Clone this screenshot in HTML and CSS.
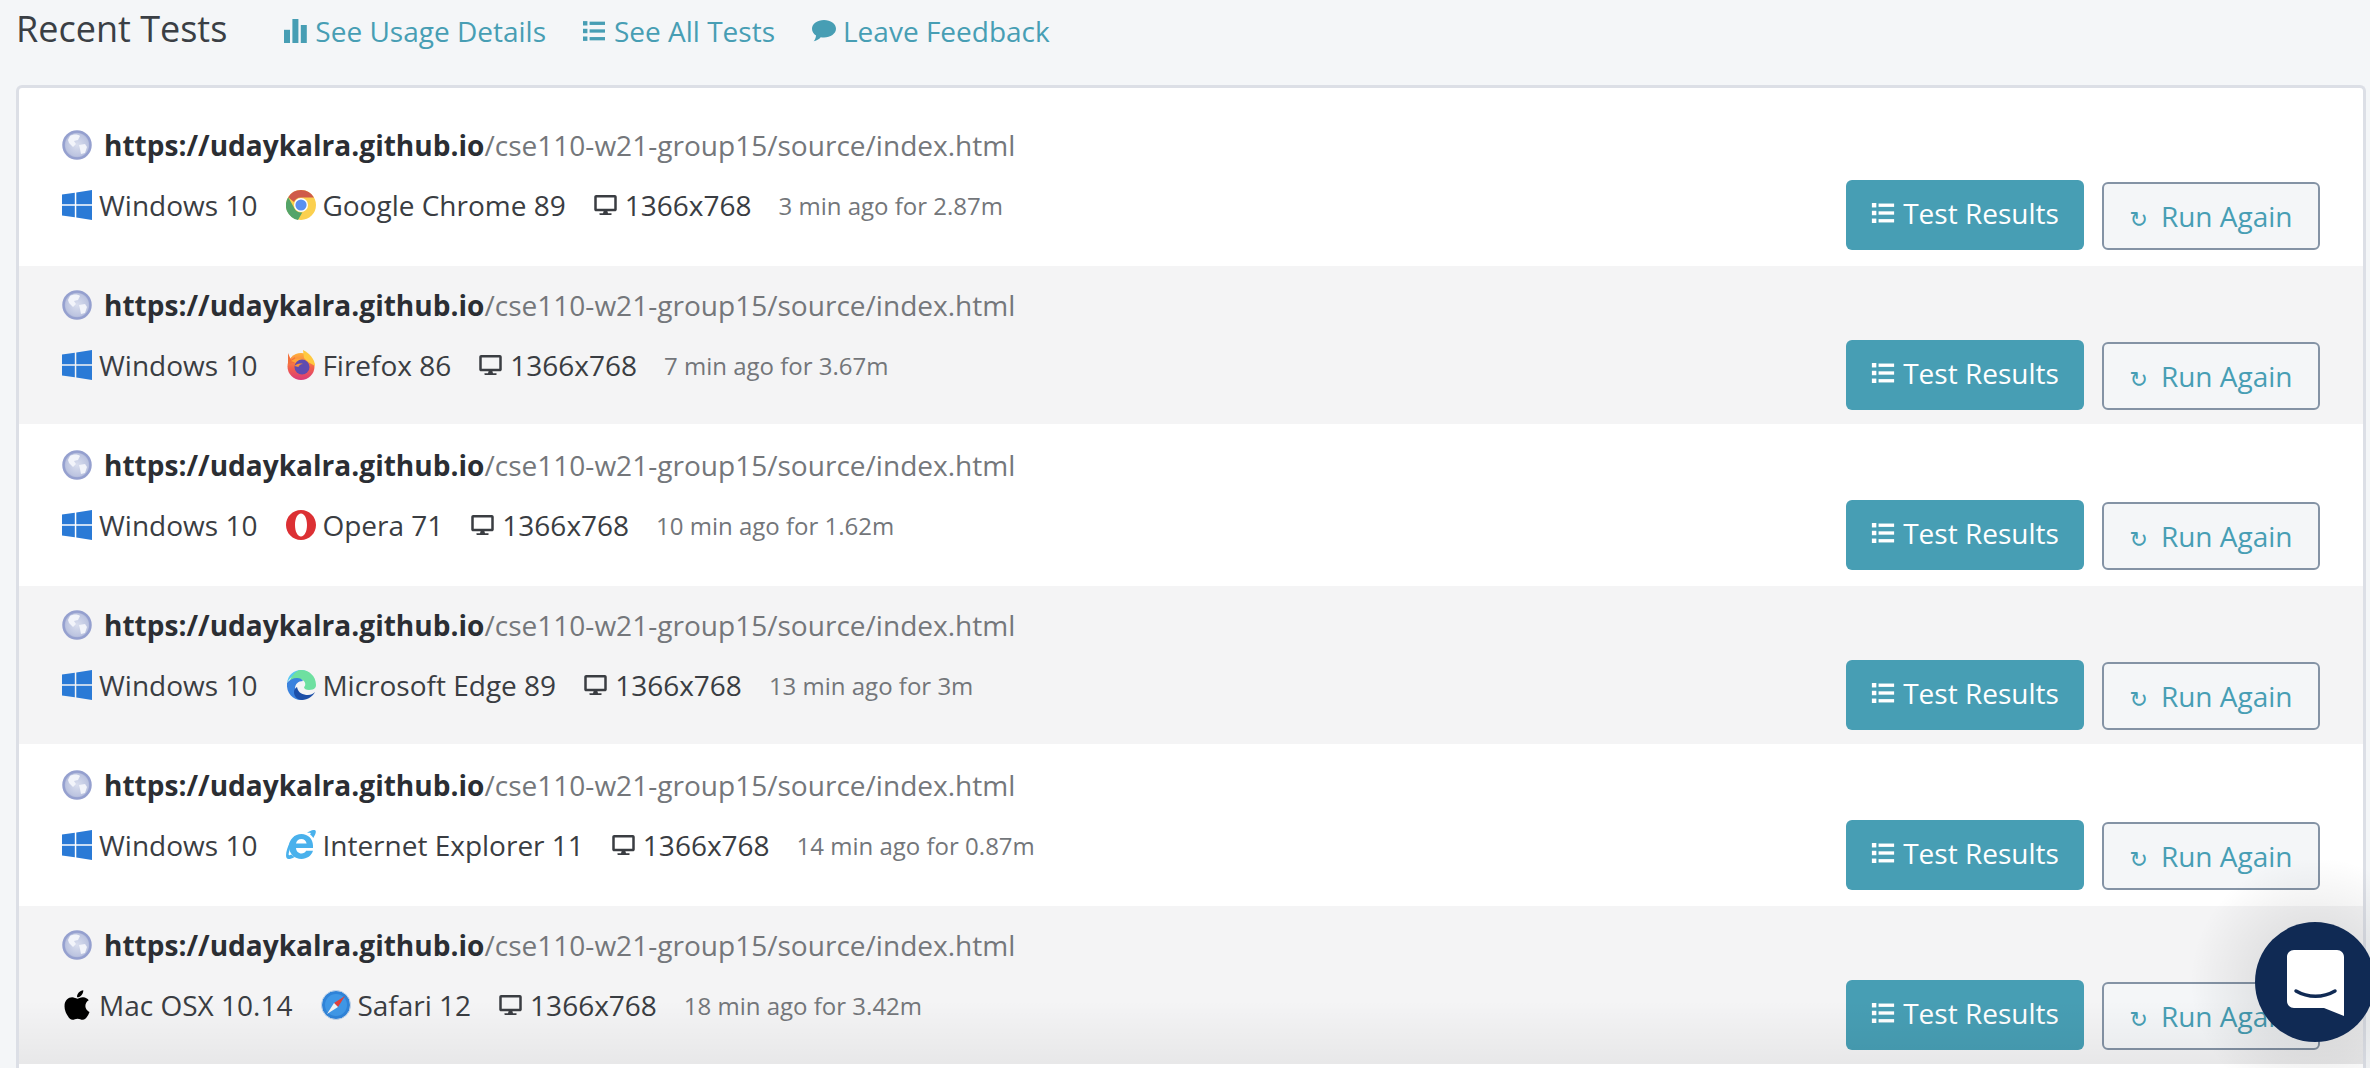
FILE: index.html
```html
<!DOCTYPE html>
<html lang="en">
<head>
  <meta charset="UTF-8" />
  <title>Recent Tests</title>
  <link rel="stylesheet" href="styles.css">
</head>
<body>
  <svg class="sprite" aria-hidden="true">
    <defs>
      <linearGradient id="foxGrad" x1="0" y1="0" x2="0" y2="1">
        <stop offset="0" stop-color="#ffb13a"/>
        <stop offset="0.55" stop-color="#f2604a"/>
        <stop offset="1" stop-color="#d93a7c"/>
      </linearGradient>
      <radialGradient id="globeGrad" cx="0.5" cy="0.5" r="0.55">
        <stop offset="0" stop-color="#d9deee"/>
        <stop offset="0.75" stop-color="#bcc4e0"/>
        <stop offset="1" stop-color="#8f9bcc"/>
      </radialGradient>
    </defs>
    <symbol id="i-globe" viewBox="0 0 30 30">
      <circle cx="15" cy="15" r="13.5" fill="url(#globeGrad)" stroke="#95a0cf" stroke-width="2.500"/>
      <path d="M8 6c3-2 8-2 10 0l-2 4-4 1 2 3-3 3-4-4-1-3z" fill="#f2f4fa"/>
      <path d="M17 15l6-1 2 3-2 6-4 1-1-5z" fill="#f2f4fa"/>
    </symbol>
    <symbol id="i-windows" viewBox="0 0 30 30">
      <path d="M0 4.600l12.800-1.800v11.500H0zM14.300 2.600L30 0v14.300H14.300zM0 15.800h12.800v11.500L0 25.400zM14.300 15.800H30V30l-15.700-2.500z" fill="#2a7ad6"/>
    </symbol>
    <symbol id="i-apple" viewBox="0 0 384 512">
      <path d="M318.700 268.700c-.2-36.700 16.400-64.400 50-84.800-18.800-26.900-47.200-41.700-84.700-44.600-35.500-2.800-74.300 20.700-88.500 20.700-15 0-49.400-19.700-76.400-19.700C63.300 141.200 4 184.800 4 273.500q0 39.300 14.400 81.200c12.800 36.700 59 126.700 107.200 125.200 25.200-.6 43-17.900 75.800-17.900 31.800 0 48.300 17.900 76.400 17.900 48.600-.7 90.400-82.500 102.600-119.300-65.200-30.700-61.700-90-61.700-91.900zm-56.600-164.200c27.300-32.400 24.800-61.900 24-72.500-24.100 1.400-52 16.400-67.900 34.900-17.500 19.800-27.800 44.300-25.600 71.900 26.100 2 49.900-11.400 69.500-34.300z" fill="#000"/>
    </symbol>
    <symbol id="i-chrome" viewBox="0 0 30 30">
      <circle cx="15" cy="15" r="15" fill="#fbd04f"/>
      <path d="M15 0a15 15 0 0 1 13 7.500H15a7.500 7.500 0 0 0-7 4.600L2.200 7.200A15 15 0 0 1 15 0z" fill="#cf5b4a"/>
      <path d="M2.200 7.200l6.500 11.500a7.500 7.500 0 0 0 7.600 3.700L12 30A15 15 0 0 1 2.200 7.200z" fill="#54a469"/>
      <circle cx="15" cy="15" r="7" fill="#fff"/>
      <circle cx="15" cy="15" r="5.600" fill="#5a8ff0"/>
    </symbol>
    <symbol id="i-firefox" viewBox="0 0 30 30">
      <circle cx="15" cy="16.500" r="13.500" fill="url(#foxGrad)"/>
      <path d="M17 0c6 3 12 9 12 16l-7-4-4-4z" fill="#ffc93f"/>
      <path d="M2 3l3 7 4-3-1 6-6 1z" fill="#f2703c"/>
      <path d="M5 11c5-3 9-3 13-1l-5 4z" fill="#ffa436"/>
      <circle cx="16" cy="17" r="7.500" fill="#5f4bb0"/>
      <path d="M8.500 16c2-2 5-3 8.500-2-3 0-4.500 2-4.500 3z" fill="#f7933a"/>
    </symbol>
    <symbol id="i-opera" viewBox="0 0 30 30">
      <path d="M15 0c8.300 0 15 6.700 15 15s-6.700 15-15 15S0 23.300 0 15 6.700 0 15 0zm0 3.600c-3.600 0-6 5-6 11.400s2.400 11.400 6 11.400 6-5 6-11.400S18.600 3.600 15 3.600z" fill="#dc3034"/>
    </symbol>
    <symbol id="i-edge" viewBox="0 0 30 30">
      <path d="M1 13C2 5 8 0 15 0c3 0 5 .7 7 2-6-1-16 2-21 11z" fill="#58c8f2"/>
      <path d="M15 0c8 0 15 6 15 15 0 2-1 5-7 5-3 0-5-1-5-3 3-2 1-9-7-8-3 .5-6 2-7 4C3 8 10 0 15 0z" fill="#6ee0a0"/>
      <path d="M1 13c2-3 6-5 10-5 3 0 5 1 6 3-5 0-8 3-8 8 0 5 4 9 9 10-1 .5-2 1-3 1C7 30 0 23 1 13z" fill="#3a82de"/>
      <path d="M11 17c1 6 6 8 11 8 3 0 5-1 7-3-2 4-7 8-13 8-5 0-8-4-8-8 0-2 1-4 3-5z" fill="#1c4fa8"/>
    </symbol>
    <symbol id="i-ie" viewBox="0 0 30 30">
      <path d="M15.500 4C22 4 27 9 27 15.500V18H10c.2 3.200 2.500 5.500 5.500 5.500 2 0 3.700-1 4.600-2.700H27C25.600 25.600 21 29 15.500 29 8.500 29 3 23.500 3 16.500S8.500 4 15.500 4zM10 13.500h10.600c-.4-2.600-2.500-4.500-5.300-4.500S10.400 10.900 10 13.500z" fill="#49b1ec"/>
      <path d="M21 3c4-3 8-4 8.700-2 .5 1.500-.5 4-2.400 7-.8-1.400-2-2.800-3.200-3.500 1.200-1.400 1-2.200-3.100-1.500zM4 12C1 18-1 25 .6 28c1 1.800 4 1.300 8-1-1.200-.6-2.400-1.400-3.300-2.400-1.700 1-3.200 1.200-2.500-1.600.3-1.400.7-3 1.200-4.700z" fill="#49b1ec"/>
    </symbol>
    <symbol id="i-safari" viewBox="0 0 30 30">
      <circle cx="15" cy="15" r="14.500" fill="#2f83d8" stroke="#c7d6e8" stroke-width="1"/>
      <circle cx="15" cy="15" r="11" fill="#3f97e6"/>
      <path d="M24 6L13 13l4 4z" fill="#e0403c"/>
      <path d="M6 24l7-11 4 4z" fill="#f3f3f3"/>
    </symbol>
    <symbol id="i-desktop" viewBox="0 0 576 512">
      <path d="M528 0H48C21.500 0 0 21.500 0 48v320c0 26.500 21.500 48 48 48h192l-16 48h-72c-13.300 0-24 10.700-24 24s10.700 24 24 24h272c13.300 0 24-10.700 24-24s-10.700-24-24-24h-72l-16-48h192c26.500 0 48-21.500 48-48V48c0-26.500-21.500-48-48-48zm-16 352H64V64h448v288z" fill="currentColor"/>
    </symbol>
    <symbol id="i-list" viewBox="0 0 20 18">
      <rect x="0" y="0" width="4" height="4" fill="currentColor"/>
      <rect x="6" y="0.500" width="14" height="3" fill="currentColor"/>
      <rect x="0" y="7" width="4" height="4" fill="currentColor"/>
      <rect x="6" y="7.500" width="14" height="3" fill="currentColor"/>
      <rect x="0" y="14" width="4" height="4" fill="currentColor"/>
      <rect x="6" y="14.500" width="14" height="3" fill="currentColor"/>
    </symbol>
    <symbol id="i-bars" viewBox="0 0 20 20">
      <rect x="0" y="9" width="5" height="11" fill="currentColor"/>
      <rect x="7" y="0" width="5" height="20" fill="currentColor"/>
      <rect x="14" y="5" width="5" height="15" fill="currentColor"/>
    </symbol>
    <symbol id="i-comment" viewBox="0 0 22 20">
      <path d="M11 0c6 0 11 3.600 11 8s-5 8-11 8c-1 0-2-.1-3-.3C6.500 17.500 4 19 1.500 19.500c1.200-1.200 2-3 2.200-5.300C1.400 12.800 0 10.500 0 8c0-4.400 5-8 11-8z" fill="currentColor"/>
    </symbol>
  </svg>

  <header class="top-bar">
    <h1>Recent Tests</h1>
    <nav class="top-links">
      <a href="#"><svg class="ico-bars"><use href="#i-bars"/></svg>See Usage Details</a>
      <a href="#"><svg class="ico-list"><use href="#i-list"/></svg>See All Tests</a>
      <a href="#"><svg class="ico-comment"><use href="#i-comment"/></svg>Leave Feedback</a>
    </nav>
  </header>

  <section class="card">
    <div class="test-row">
      <div class="test-info">
        <div class="test-url"><svg class="ico-globe"><use href="#i-globe"/></svg><b>https://udaykalra.github.io</b>/cse110-w21-group15/source/index.html</div>
        <div class="test-meta">
          <span class="item"><svg class="ico-os"><use href="#i-windows"/></svg>Windows 10</span>
          <span class="item"><svg class="ico-os"><use href="#i-chrome"/></svg>Google Chrome 89</span>
          <span class="item"><svg class="ico-desktop"><use href="#i-desktop"/></svg>1366x768</span>
          <span class="ago">3 min ago for 2.87m</span>
        </div>
      </div>
      <div class="test-actions">
        <a class="btn-results" href="#"><svg class="ico-list"><use href="#i-list"/></svg>Test Results</a>
        <a class="btn-again" href="#"><span class="redo">↻</span>Run Again</a>
      </div>
    </div>

    <div class="test-row">
      <div class="test-info">
        <div class="test-url"><svg class="ico-globe"><use href="#i-globe"/></svg><b>https://udaykalra.github.io</b>/cse110-w21-group15/source/index.html</div>
        <div class="test-meta">
          <span class="item"><svg class="ico-os"><use href="#i-windows"/></svg>Windows 10</span>
          <span class="item"><svg class="ico-os"><use href="#i-firefox"/></svg>Firefox 86</span>
          <span class="item"><svg class="ico-desktop"><use href="#i-desktop"/></svg>1366x768</span>
          <span class="ago">7 min ago for 3.67m</span>
        </div>
      </div>
      <div class="test-actions">
        <a class="btn-results" href="#"><svg class="ico-list"><use href="#i-list"/></svg>Test Results</a>
        <a class="btn-again" href="#"><span class="redo">↻</span>Run Again</a>
      </div>
    </div>

    <div class="test-row">
      <div class="test-info">
        <div class="test-url"><svg class="ico-globe"><use href="#i-globe"/></svg><b>https://udaykalra.github.io</b>/cse110-w21-group15/source/index.html</div>
        <div class="test-meta">
          <span class="item"><svg class="ico-os"><use href="#i-windows"/></svg>Windows 10</span>
          <span class="item"><svg class="ico-os"><use href="#i-opera"/></svg>Opera 71</span>
          <span class="item"><svg class="ico-desktop"><use href="#i-desktop"/></svg>1366x768</span>
          <span class="ago">10 min ago for 1.62m</span>
        </div>
      </div>
      <div class="test-actions">
        <a class="btn-results" href="#"><svg class="ico-list"><use href="#i-list"/></svg>Test Results</a>
        <a class="btn-again" href="#"><span class="redo">↻</span>Run Again</a>
      </div>
    </div>

    <div class="test-row">
      <div class="test-info">
        <div class="test-url"><svg class="ico-globe"><use href="#i-globe"/></svg><b>https://udaykalra.github.io</b>/cse110-w21-group15/source/index.html</div>
        <div class="test-meta">
          <span class="item"><svg class="ico-os"><use href="#i-windows"/></svg>Windows 10</span>
          <span class="item"><svg class="ico-os"><use href="#i-edge"/></svg>Microsoft Edge 89</span>
          <span class="item"><svg class="ico-desktop"><use href="#i-desktop"/></svg>1366x768</span>
          <span class="ago">13 min ago for 3m</span>
        </div>
      </div>
      <div class="test-actions">
        <a class="btn-results" href="#"><svg class="ico-list"><use href="#i-list"/></svg>Test Results</a>
        <a class="btn-again" href="#"><span class="redo">↻</span>Run Again</a>
      </div>
    </div>

    <div class="test-row">
      <div class="test-info">
        <div class="test-url"><svg class="ico-globe"><use href="#i-globe"/></svg><b>https://udaykalra.github.io</b>/cse110-w21-group15/source/index.html</div>
        <div class="test-meta">
          <span class="item"><svg class="ico-os"><use href="#i-windows"/></svg>Windows 10</span>
          <span class="item"><svg class="ico-os"><use href="#i-ie"/></svg>Internet Explorer 11</span>
          <span class="item"><svg class="ico-desktop"><use href="#i-desktop"/></svg>1366x768</span>
          <span class="ago">14 min ago for 0.87m</span>
        </div>
      </div>
      <div class="test-actions">
        <a class="btn-results" href="#"><svg class="ico-list"><use href="#i-list"/></svg>Test Results</a>
        <a class="btn-again" href="#"><span class="redo">↻</span>Run Again</a>
      </div>
    </div>

    <div class="test-row">
      <div class="test-info">
        <div class="test-url"><svg class="ico-globe"><use href="#i-globe"/></svg><b>https://udaykalra.github.io</b>/cse110-w21-group15/source/index.html</div>
        <div class="test-meta">
          <span class="item"><svg class="ico-os ico-apple"><use href="#i-apple"/></svg>Mac OSX 10.14</span>
          <span class="item"><svg class="ico-os"><use href="#i-safari"/></svg>Safari 12</span>
          <span class="item"><svg class="ico-desktop"><use href="#i-desktop"/></svg>1366x768</span>
          <span class="ago">18 min ago for 3.42m</span>
        </div>
      </div>
      <div class="test-actions">
        <a class="btn-results" href="#"><svg class="ico-list"><use href="#i-list"/></svg>Test Results</a>
        <a class="btn-again" href="#"><span class="redo">↻</span>Run Again</a>
      </div>
    </div>
  </section>

  <div class="bottom-fade"></div>
  <div class="chat-glow"></div>
  <button class="chat-launcher" aria-label="Open chat">
    <svg viewBox="0 0 57 66" width="57" height="66">
      <path d="M7 0h43c3.900 0 7 3.100 7 7v59l-20-8H7c-3.900 0-7-3.100-7-7V7c0-3.900 3.100-7 7-7z" fill="#fff"/>
      <path d="M9 41c12 7 27 7 39 0" fill="none" stroke="#102a54" stroke-width="3.500" stroke-linecap="round"/>
    </svg>
  </button>
</body>
</html>
```

FILE: styles.css
```css
* {
  box-sizing: border-box;
}

html,
body {
  height: 1068px;
  overflow: hidden;
}

body {
  margin: 0;
  font-family: 'Open Sans', sans-serif;
  background: #f4f6f8;
  color: #333;
  padding: 0 4px 0 16px;
}

a {
  text-decoration: none;
}

svg {
  flex: none;
}

.sprite {
  position: absolute;
  width: 0;
  height: 0;
}

.top-bar {
  display: flex;
  align-items: center;
  height: 85px;
  padding-bottom: 28px;
}

.top-bar h1 {
  margin: 0 57px 0 0;
  font-size: 36px;
  font-weight: 400;
  color: #3a3f45;
}

.top-links {
  display: flex;
  gap: 37px;
  padding-top: 4px;
}

.top-links a {
  display: flex;
  align-items: center;
  font-size: 28px;
  color: #479eb4;
}

.ico-bars {
  width: 24px;
  height: 24px;
  margin-right: 7px;
}

.ico-comment {
  width: 24px;
  height: 22px;
  margin-right: 7px;
}

.top-links .ico-list {
  width: 22px;
  height: 20px;
  margin-right: 9px;
}

.card {
  height: 983px;
  background: #fff;
  border: 3px solid #dcdfe6;
  border-bottom: none;
  border-radius: 6px 6px 0 0;
  padding-top: 18px;
}

.test-row {
  display: flex;
  justify-content: space-between;
  align-items: flex-end;
  height: 158px;
  margin-bottom: 2px;
  padding: 0 43px 14px 43px;
}

.test-row:nth-child(even) {
  background: #f4f4f5;
}

.test-url {
  display: flex;
  align-items: center;
  font-size: 28.05px;
  color: #74777b;
  margin-bottom: 22px;
}

.test-url b {
  color: #2b2e33;
}

.ico-globe {
  width: 30px;
  height: 30px;
  margin-right: 12px;
}

.test-info {
  align-self: flex-start;
  padding-top: 20px;
}

.test-meta {
  display: flex;
  align-items: center;
  font-size: 28px;
  color: #3a3d42;
  height: 38px;
}

.item {
  display: flex;
  align-items: center;
  margin-right: 27px;
}

.ico-os {
  width: 30px;
  height: 30px;
  margin-right: 7px;
}

.item + .item .ico-os {
  margin-left: 2px;
  margin-right: 6px;
}

.ico-apple {
  width: 26px;
  height: 34px;
  margin: 0 9px 0 2px;
}

.ico-desktop {
  width: 23px;
  height: 20px;
  margin-left: 1px;
  margin-right: 8px;
}

.ago {
  font-size: 24px;
  color: #73767a;
}

.test-actions {
  display: flex;
  align-items: flex-end;
  gap: 18px;
}

.btn-results {
  display: flex;
  align-items: center;
  justify-content: center;
  width: 238px;
  height: 70px;
  padding-bottom: 4px;
  background: #479eb4;
  border-radius: 6px;
  color: #fff;
  font-size: 28px;
}

.btn-results .ico-list {
  width: 24px;
  height: 20px;
  margin-right: 8px;
}

.btn-again {
  display: flex;
  align-items: center;
  justify-content: center;
  width: 218px;
  height: 68px;
  background: #f4f6f8;
  border: 2px solid #8493a5;
  border-radius: 6px;
  color: #479eb4;
  font-size: 28px;
}

.redo {
  font-family: 'DejaVu Sans', sans-serif;
  font-size: 22px;
  margin: 6px 13px 0 0;
}

.bottom-fade {
  position: absolute;
  left: 19px;
  right: 7px;
  top: 1000px;
  height: 64px;
  background: linear-gradient(to bottom, rgba(0, 0, 0, 0), rgba(0, 0, 0, 0.05));
  pointer-events: none;
}

.chat-glow {
  position: absolute;
  left: 2120px;
  top: 860px;
  width: 250px;
  height: 208px;
  background: radial-gradient(circle at 195px 122px, rgba(0, 0, 0, 0.07) 60px, rgba(0, 0, 0, 0) 125px);
  pointer-events: none;
}

.chat-launcher {
  position: absolute;
  left: 2255px;
  top: 922px;
  width: 120px;
  height: 120px;
  display: flex;
  align-items: center;
  justify-content: center;
  padding: 2px 0 0;
  border: none;
  border-radius: 50%;
  background: #102a54;
}
```
